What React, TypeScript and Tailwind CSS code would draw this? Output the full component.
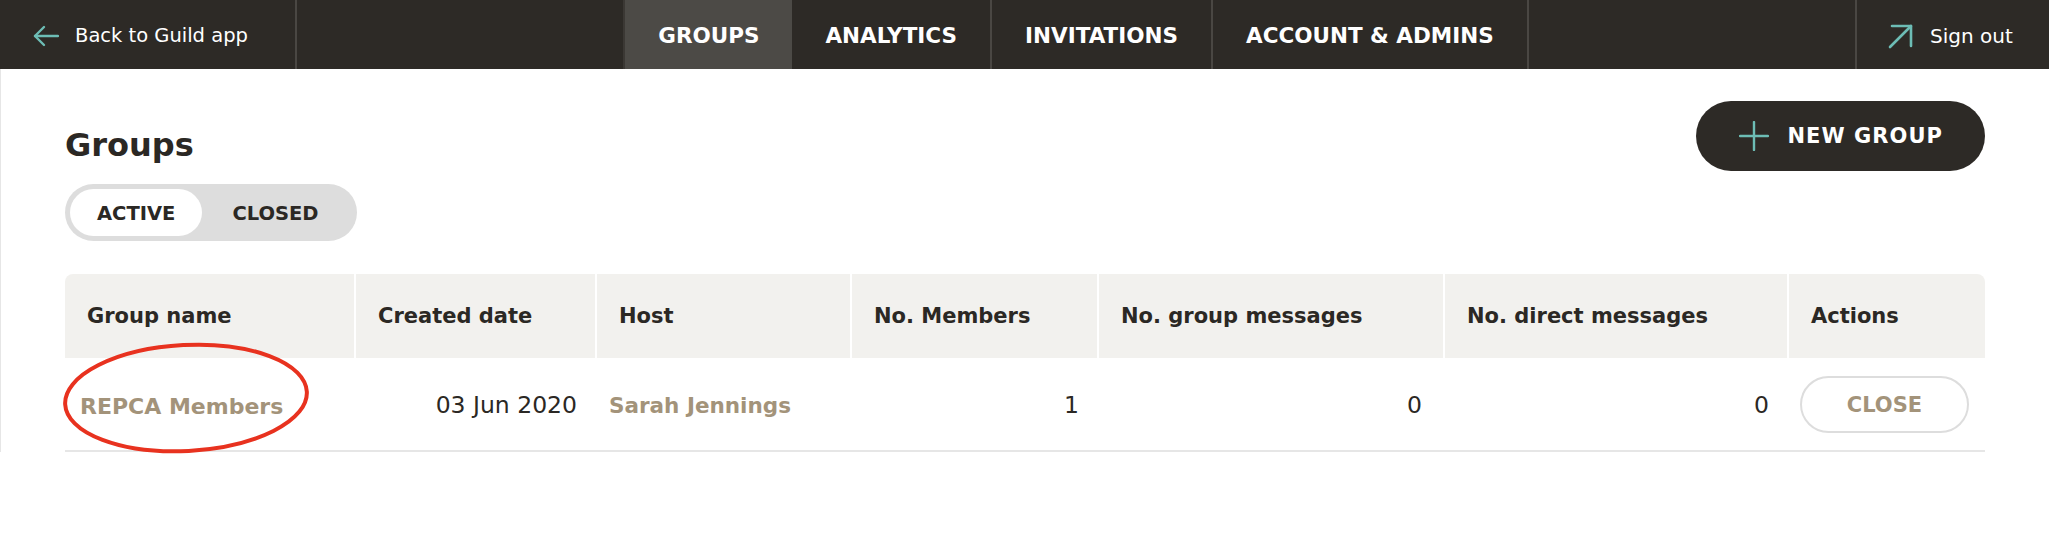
import React from "react";

const font = { fontFamily: "'DejaVu Sans', 'Noto Sans', sans-serif" };

const tabs = ["GROUPS", "ANALYTICS", "INVITATIONS", "ACCOUNT & ADMINS"];

const columns = [
  "Group name",
  "Created date",
  "Host",
  "No. Members",
  "No. group messages",
  "No. direct messages",
  "Actions",
];

const cols = "grid grid-cols-[289px_239px_253px_245px_344px_342px_196px] gap-x-[2px]";

function ArrowLeft() {
  return (
    <svg width="26" height="22" viewBox="0 0 26 22" fill="none" stroke="#6dbdb5" strokeWidth="2.4" strokeLinecap="round" strokeLinejoin="round">
      <path d="M25 11H2" />
      <path d="M11 2L2 11l9 9" />
    </svg>
  );
}

function ArrowUpRight() {
  return (
    <svg width="26" height="26" viewBox="0 0 26 26" fill="none" stroke="#6dbdb5" strokeWidth="2.6" strokeLinecap="round" strokeLinejoin="round">
      <path d="M2 24L23 3" />
      <path d="M4 3h19v20" />
    </svg>
  );
}

function Plus() {
  return (
    <svg width="30" height="30" viewBox="0 0 30 30" fill="none" stroke="#6dbdb5" strokeWidth="2.4" strokeLinecap="round">
      <path d="M15 1v28" />
      <path d="M1 15h28" />
    </svg>
  );
}

function Nav() {
  return (
    <nav className="flex h-[69px] bg-[#2d2a26] text-white">
      <div className="flex w-[297px] items-center gap-[16px] border-r-2 border-[#4a4743] pl-[33px] pt-[3px]">
        <ArrowLeft />
        <span className="text-[19.5px]">Back to Guild app</span>
      </div>
      <div className="flex flex-1 justify-center">
        {tabs.map((t, i) => (
          <div
            key={t}
            className={
              i === 0
                ? "flex items-center border-l-2 border-[#3b3834] bg-[#4c4a46] px-[33px] pt-[3px] text-[21.5px] font-bold"
                : "flex items-center border-r-2 border-[#4a4743] px-[33px] pt-[3px] text-[21.5px] font-bold"
            }
          >
            {t}
          </div>
        ))}
      </div>
      <div className="flex w-[194px] items-center gap-[16px] border-l-2 border-[#4a4743] pl-[31px] pt-[3px]">
        <ArrowUpRight />
        <span className="text-[20px]">Sign out</span>
      </div>
    </nav>
  );
}

function Toggle() {
  return (
    <div className="mt-[19px] flex h-[57px] w-fit items-center rounded-full bg-[#dddddd] p-[5px] text-[19.5px] font-bold text-[#2b2824]">
      <div className="flex h-full items-center rounded-full bg-white px-[27px] pt-[2px]">ACTIVE</div>
      <div className="flex h-full items-center pl-[30px] pr-[33px] pt-[2px]">CLOSED</div>
    </div>
  );
}

export default function App() {
  return (
    <div className="min-h-[533px] bg-white text-[#2b2824]" style={font}>
      <Nav />
      <main className="border-l border-[#e6e6e6] px-[64px] pt-[32px]">
        <div className="flex items-start justify-between">
          <div className="pt-[24px]">
            <h1 className="text-[32px] font-bold leading-[40px]">Groups</h1>
            <Toggle />
          </div>
          <button
            type="button"
            className="flex h-[70px] items-center gap-[18px] rounded-full bg-[#2d2a26] pl-[43px] pr-[42px] text-[21px] font-bold tracking-[0.05em] text-white"
          >
            <Plus />
            <span className="pt-[2px]">NEW GROUP</span>
          </button>
        </div>

        <div className="mt-[33px]">
          <div className={`${cols} overflow-hidden rounded-t-lg`}>
            {columns.map((c) => (
              <div key={c} className="flex h-[84px] items-center bg-[#f2f1ee] pl-[22px] pt-[2px] text-[21px] font-bold">
                {c}
              </div>
            ))}
          </div>
          <div className={`${cols} h-[94px] border-b-2 border-[#e6e6e6] pt-[4px] text-[23.5px]`}>
            <div className="relative flex items-center pl-[15px]">
              <span className="text-[22px] font-bold text-[#a3937a]">REPCA Members</span>
              <svg
                className="absolute left-[-4px] top-[-21px] -rotate-3"
                width="250"
                height="114"
                viewBox="0 0 250 114"
                fill="none"
              >
                <ellipse cx="125" cy="57" rx="121" ry="53" stroke="#e8321f" strokeWidth="4" />
              </svg>
            </div>
            <div className="flex items-center justify-end pr-[18px]">03 Jun 2020</div>
            <div className="flex items-center pl-[12px] text-[21.5px] font-bold text-[#a3937a]">Sarah Jennings</div>
            <div className="flex items-center justify-end pr-[18px]">1</div>
            <div className="flex items-center justify-end pr-[21px]">0</div>
            <div className="flex items-center justify-end pr-[18px]">0</div>
            <div className="flex items-center pl-[11px] pb-[4px]">
              <button
                type="button"
                className="h-[57px] w-[169px] rounded-full border-2 border-[#dddddd] pt-[3px] text-[21px] font-bold text-[#a3937a]"
              >
                CLOSE
              </button>
            </div>
          </div>
        </div>
      </main>
    </div>
  );
}
